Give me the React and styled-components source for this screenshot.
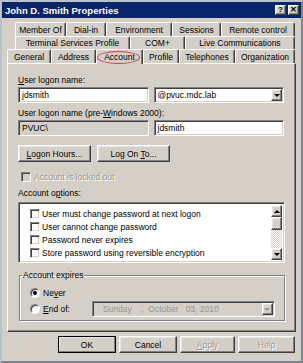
import React from 'react';
import styled, { createGlobalStyle, css } from 'styled-components';

const face = '#d4d0c8';
const shadow = '#808080';
const dark = '#404040';

const GlobalStyle = createGlobalStyle`
  html, body {
    margin: 0;
    padding: 0;
    background: ${face};
  }
  body {
    font-family: "Liberation Sans", Arial, sans-serif;
    font-size: 8.5px;
    color: #000;
  }
  * { box-sizing: border-box; }
`;

const raised = css`
  border: 1px solid;
  border-color: #fff ${dark} ${dark} #fff;
  box-shadow: inset -1px -1px 0 ${shadow}, inset 1px 1px 0 #e8e6e0;
`;

const sunken = css`
  border: 1px solid;
  border-color: ${shadow} #fff #fff ${shadow};
  box-shadow: inset 1px 1px 0 ${dark}, inset -1px -1px 0 ${face};
`;

const Window = styled.div`
  width: 303px;
  height: 363px;
  background: ${face};
  border: 2px solid;
  border-color: #b9c3cf #7d8590 #7d8590 #b9c3cf;
  display: flex;
  flex-direction: column;
`;

const TitleBar = styled.div`
  height: 16px;
  background: #0a246a;
  color: #fff;
  font-weight: bold;
  font-size: 9.5px;
  display: flex;
  align-items: center;
  justify-content: space-between;
  padding: 0 2px 0 3px;
`;

const TitleButtons = styled.div`
  display: flex;
  gap: 2px;
`;

const TitleButton = styled.div`
  ${raised};
  width: 11px;
  height: 10px;
  background: ${face};
  color: #000;
  font-size: 8px;
  font-weight: bold;
  line-height: 8px;
  display: flex;
  align-items: center;
  justify-content: center;
`;

const Body = styled.div`
  padding: 4px 5px 0 5px;
  display: flex;
  flex-direction: column;
`;

const TabRow = styled.div`
  display: flex;
  height: ${p => p.$h}px;
  padding-left: ${p => p.$indent}px;
`;

const Tab = styled.div`
  position: relative;
  width: ${p => p.$w}px;
  border-top: 1px solid #fff;
  border-left: 1px solid #fff;
  border-right: 1px solid ${dark};
  box-shadow: inset -1px 0 0 ${shadow};
  border-radius: 2px 2px 0 0;
  display: flex;
  align-items: center;
  justify-content: center;
  white-space: nowrap;
  line-height: 1;
  padding-top: 1px;
  background: ${face};
  ${p => p.$active && css`
    margin-bottom: -1px;
    z-index: 1;
  `}
`;

const Circle = styled.span`
  position: absolute;
  left: 0;
  right: 2px;
  top: 1px;
  bottom: 0;
  border: 1px solid #d23a48;
  border-radius: 50%;
`;

const Panel = styled.div`
  height: 269px;
  border: 1px solid;
  border-color: #fff ${dark} ${dark} #fff;
  box-shadow: inset -1px -1px 0 ${shadow};
  padding: 11px 11px 0 10px;
  display: flex;
  flex-direction: column;
`;

const Label = styled.div`
  height: 11px;
  line-height: 11px;
  margin-top: ${p => p.$mt || 0}px;
  color: ${p => (p.$disabled ? '#9a978f' : '#000')};
  text-shadow: ${p => (p.$disabled ? '1px 1px 0 #fff' : 'none')};
  white-space: nowrap;
  u { text-decoration: underline; }
`;

const Row = styled.div`
  display: flex;
  align-items: center;
  gap: ${p => p.$gap || 0}px;
  margin-top: ${p => p.$mt || 0}px;
`;

const TextBox = styled.div`
  ${sunken};
  width: 131px;
  height: 16px;
  background: ${p => (p.$disabled ? face : '#fff')};
  padding: 0 3px;
  display: flex;
  align-items: center;
  justify-content: space-between;
`;

const DropButton = styled.div`
  ${raised};
  width: 11px;
  height: 12px;
  background: ${face};
  display: flex;
  align-items: center;
  justify-content: center;
  margin-right: -2px;
  &::after {
    content: '';
    border-left: 3px solid transparent;
    border-right: 3px solid transparent;
    border-top: ${p => (p.$up ? 0 : 3)}px solid ${p => (p.$disabled ? '#9a978f' : '#000')};
    border-bottom: ${p => (p.$up ? 3 : 0)}px solid #000;
  }
`;

const Button = styled.div`
  ${raised};
  width: ${p => p.$w}px;
  height: 17px;
  background: ${face};
  display: flex;
  align-items: center;
  justify-content: center;
  white-space: pre;
  color: ${p => (p.$disabled ? '#9a978f' : '#000')};
  text-shadow: ${p => (p.$disabled ? '1px 1px 0 #fff' : 'none')};
  ${p => p.$default && css`
    outline: 1px solid #000;
    outline-offset: -1px;
  `}
  u { text-decoration: underline; }
`;

const CheckRow = styled.div`
  display: flex;
  align-items: center;
  gap: ${p => p.$gap || 3}px;
  height: 13px;
  color: ${p => (p.$disabled ? '#9a978f' : '#000')};
  text-shadow: ${p => (p.$disabled ? '1px 1px 0 #fff' : 'none')};
  white-space: nowrap;
  margin-left: ${p => p.$ml || 0}px;
  margin-top: ${p => p.$mt || 0}px;
  u { text-decoration: underline; }
`;

const Check = styled.span`
  ${sunken};
  width: 10px;
  height: 10px;
  flex: none;
  background: ${p => (p.$disabled ? face : '#fff')};
`;

const ListBox = styled.div`
  ${sunken};
  margin-top: 3px;
  height: 61px;
  width: 267px;
  background: #fff;
  display: flex;
  padding: 2px;
`;

const ListItems = styled.div`
  flex: 1;
  padding: 2px 0 0 9px;
  display: flex;
  flex-direction: column;
`;

const ScrollBar = styled.div`
  width: 11px;
  display: flex;
  flex-direction: column;
`;

const Track = styled.div`
  flex: 1;
  background: repeating-conic-gradient(#fff 0 25%, ${face} 0 50%) 0 0 / 2px 2px;
`;

const Thumb = styled.div`
  ${raised};
  height: 13px;
  background: ${face};
`;

const GroupBox = styled.fieldset`
  margin: 7px 0 0 1px;
  width: 266px;
  height: 51px;
  border: 1px solid ${shadow};
  box-shadow: 1px 1px 0 #fff, inset 1px 1px 0 #fff;
  padding: 3px 0 0 10px;
  display: flex;
  flex-direction: column;
  legend {
    padding: 0 1px;
    margin-left: -8px;
    line-height: 11px;
  }
`;

const Radio = styled.span`
  width: 10px;
  height: 10px;
  border-radius: 50%;
  flex: none;
  background: #fff;
  border: 1px solid;
  border-color: ${shadow} #fff #fff ${shadow};
  box-shadow: inset 1px 1px 0 ${dark};
  display: flex;
  align-items: center;
  justify-content: center;
  &::after {
    content: '';
    width: 4px;
    height: 4px;
    border-radius: 50%;
    background: ${p => (p.$on ? '#000' : 'transparent')};
  }
`;

const DateBox = styled.div`
  ${sunken};
  width: 183px;
  height: 16px;
  margin-left: 22px;
  background: ${face};
  color: #9a978f;
  display: flex;
  align-items: center;
  justify-content: space-between;
  padding: 0 3px 0 10px;
  white-space: pre;
`;

const Footer = styled.div`
  display: flex;
  justify-content: flex-end;
  gap: 3px;
  margin-top: 4px;
  padding-right: 1px;
`;

const topRow = [['Member Of', 51], ['Dial-in', 40], ['Environment', 66], ['Sessions', 49], ['Remote control', 74]];
const midRow = [['Terminal Services Profile', 115], ['COM+', 55], ['Live Communications', 110]];
const lowRow = [['General', 44], ['Address', 45], ['Account', 47], ['Profile', 36], ['Telephones', 56], ['Organization', 60]];

const options = [
  'User must change password at next logon',
  'User cannot change password',
  'Password never expires',
  'Store password using reversible encryption',
];

export default function App() {
  return (
    <>
      <GlobalStyle />
      <Window>
        <TitleBar>
          <span>John D. Smith Properties</span>
          <TitleButtons>
            <TitleButton>?</TitleButton>
            <TitleButton>✕</TitleButton>
          </TitleButtons>
        </TitleBar>
        <Body>
          <TabRow $h={14} $indent={8}>
            {topRow.map(([t, w]) => <Tab key={t} $w={w}>{t}</Tab>)}
          </TabRow>
          <TabRow $h={13} $indent={8}>
            {midRow.map(([t, w]) => <Tab key={t} $w={w}>{t}</Tab>)}
          </TabRow>
          <TabRow $h={14} $indent={0}>
            {lowRow.map(([t, w]) => (
              <Tab key={t} $w={w} $active={t === 'Account'}>
                {t}
                {t === 'Account' && <Circle />}
              </Tab>
            ))}
          </TabRow>
          <Panel>
            <Label><u>U</u>ser logon name:</Label>
            <Row $mt={1} $gap={5}>
              <TextBox>jdsmith</TextBox>
              <TextBox>@pvuc.mdc.lab<DropButton /></TextBox>
            </Row>
            <Label $mt={5}>User logon name (pre-<u>W</u>indows 2000):</Label>
            <Row $mt={1} $gap={5}>
              <TextBox $disabled>PVUC\</TextBox>
              <TextBox>jdsmith</TextBox>
            </Row>
            <Row $mt={9} $gap={6}>
              <Button $w={73}><span><u>L</u>ogon Hours...</span></Button>
              <Button $w={73}><span>Log On <u>T</u>o...</span></Button>
            </Row>
            <CheckRow $disabled $ml={3} $mt={8}>
              <Check $disabled />
              <span>Account is locked out</span>
            </CheckRow>
            <Label $mt={5}>Account o<u>p</u>tions:</Label>
            <ListBox>
              <ListItems>
                {options.map(o => (
                  <CheckRow key={o} $gap={2}>
                    <Check />
                    <span>{o}</span>
                  </CheckRow>
                ))}
              </ListItems>
              <ScrollBar>
                <DropButton $up />
                <Thumb />
                <Track />
                <DropButton />
              </ScrollBar>
            </ListBox>
            <GroupBox>
              <legend>Account expires</legend>
              <CheckRow $mt={2}>
                <Radio $on />
                <span>Ne<u>v</u>er</span>
              </CheckRow>
              <Row $mt={2}>
                <CheckRow>
                  <Radio />
                  <span><u>E</u>nd of:</span>
                </CheckRow>
                <DateBox>
                  <span>Sunday    ,  October   03, 2010</span>
                  <DropButton $disabled />
                </DateBox>
              </Row>
            </GroupBox>
          </Panel>
          <Footer>
            <Button $w={58} $default>OK</Button>
            <Button $w={58}>Cancel</Button>
            <Button $w={55} $disabled><span><u>A</u>pply</span></Button>
            <Button $w={57} $disabled>Help</Button>
          </Footer>
        </Body>
      </Window>
    </>
  );
}
